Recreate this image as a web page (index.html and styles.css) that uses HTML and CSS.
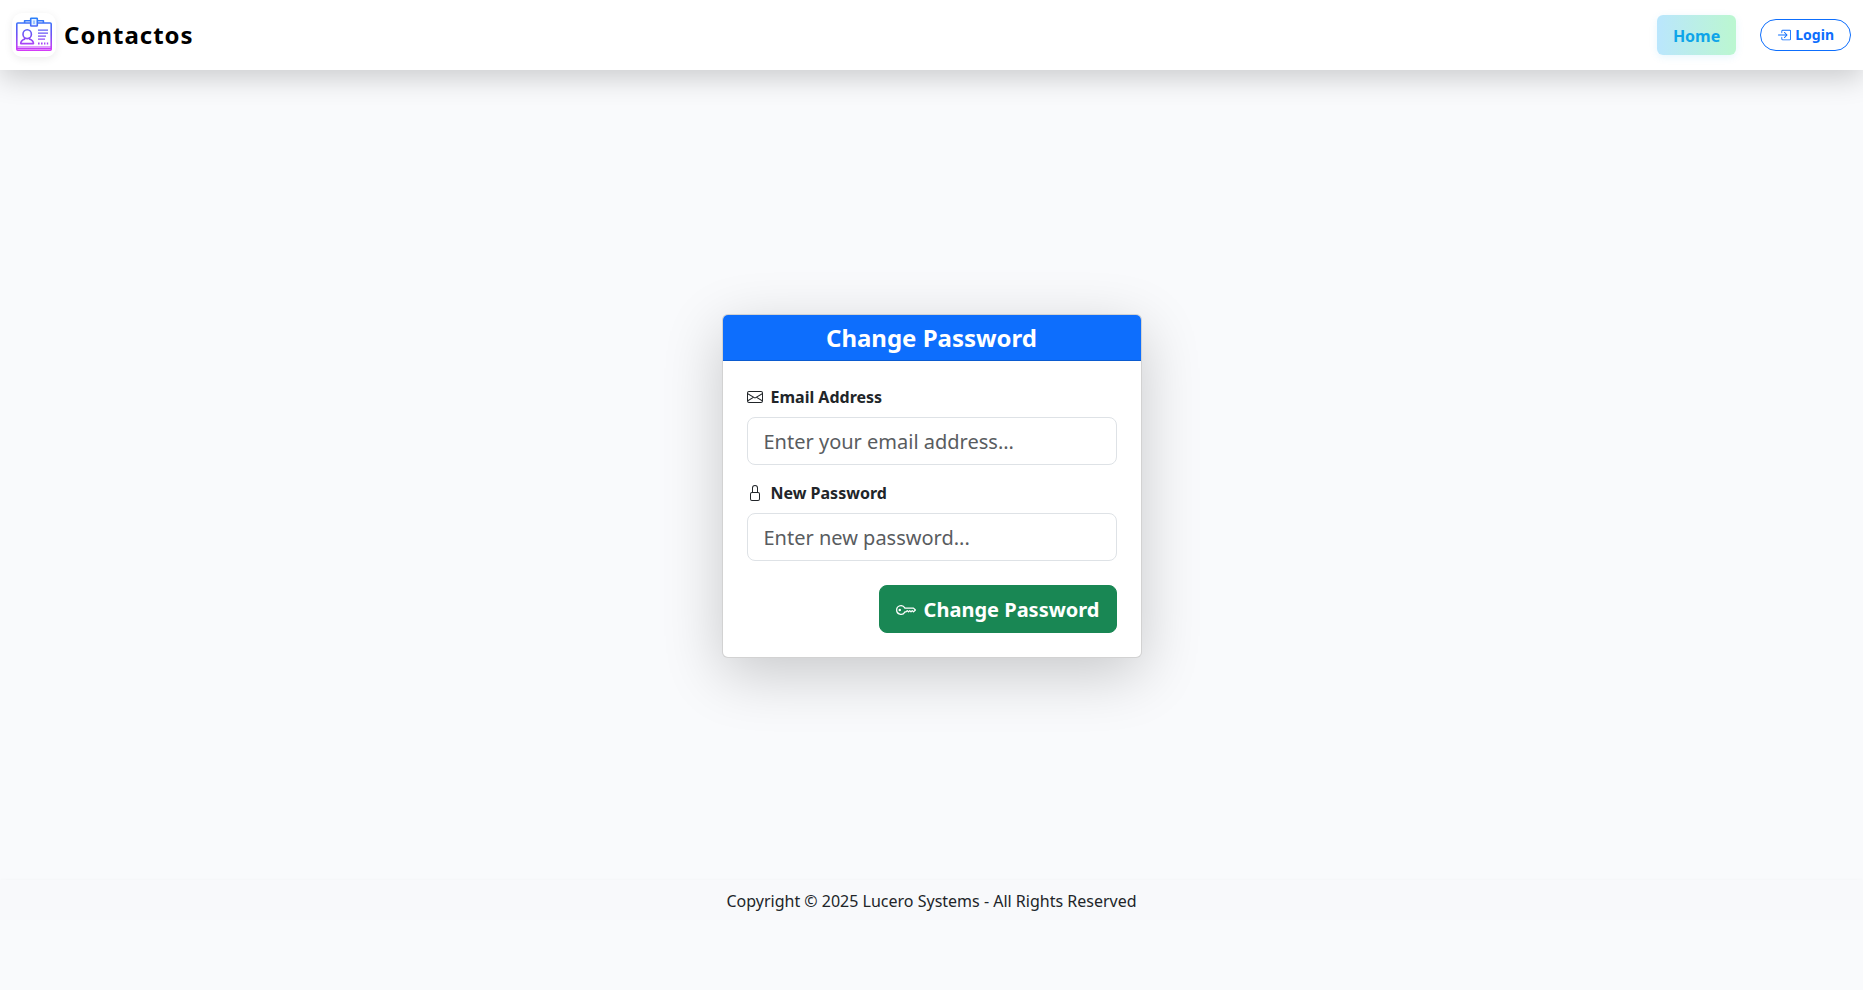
FILE: index.html
```html
<!DOCTYPE html>
<html lang="en">
<head>
  <meta charset="utf-8">
  <meta name="viewport" content="width=device-width, initial-scale=1">
  <title>Contactos - Change Password</title>
  <link rel="stylesheet" href="styles.css">
</head>
<body>
  <nav class="navbar">
    <a class="brand" href="#">
      <span class="brand-logo">
        <svg viewBox="0 0 36 36" fill="none" stroke="url(#logo-gradient)" stroke-width="1.6" stroke-linejoin="round" aria-hidden="true">
          <defs>
            <linearGradient id="logo-gradient" gradientUnits="userSpaceOnUse" x1="0" y1="0" x2="0" y2="35">
              <stop offset="0" stop-color="#2583fb"/>
              <stop offset="0.5" stop-color="#7052f5"/>
              <stop offset="1" stop-color="#dd38f8"/>
            </linearGradient>
          </defs>
          <rect x="0.8" y="6" width="34.4" height="27.3" rx="1"/>
          <path d="M1 30h34M1 31.7h34" stroke-width="1.2"/>
          <path d="M8.6 6V3.7h6M21.4 3.7h6V6"/>
          <rect x="14.7" y="1.2" width="6.6" height="7.8" rx="0.6" fill="#e6f1ff"/>
          <path d="M18 3.4v3.6" stroke="#8dbcff"/>
          <path d="M8.6 20.6v1.6C5.8 23 4.7 24.6 4.7 26.6h12.8c0-2-1.1-3.6-3.9-4.4v-1.6"/>
          <ellipse cx="11.2" cy="17.2" rx="4.2" ry="4.4"/>
          <path d="M22 13.2h10M22 16.2h10M22 19.2h8M22 22.2h7" stroke-width="1.3"/>
          <path d="M22 26.5h1.6M25 26.5h1.6M28 26.5h1.4M30.8 26.5h1.4" stroke-width="2"/>
        </svg>
      </span>
      <span class="brand-name">Contactos</span>
    </a>
    <div class="nav-actions">
      <a class="nav-link" href="#" aria-current="page">Home</a>
      <a class="login-link" href="#">
        <svg class="icon" viewBox="0 0 16 16" fill="currentColor" aria-hidden="true"><path fill-rule="evenodd" d="M6 3.5a.5.5 0 0 1 .5-.5h8a.5.5 0 0 1 .5.5v9a.5.5 0 0 1-.5.5h-8a.5.5 0 0 1-.5-.5v-2a.5.5 0 0 0-1 0v2A1.5 1.5 0 0 0 6.5 14h8a1.5 1.5 0 0 0 1.5-1.5v-9A1.5 1.5 0 0 0 14.5 2h-8A1.5 1.5 0 0 0 5 3.5v2a.5.5 0 0 0 1 0z"/><path fill-rule="evenodd" d="M11.854 8.354a.5.5 0 0 0 0-.708l-3-3a.5.5 0 1 0-.708.708L10.293 7.5H1.5a.5.5 0 0 0 0 1h8.793l-2.147 2.146a.5.5 0 0 0 .708.708z"/></svg>
        Login
      </a>
    </div>
  </nav>

  <main class="page">
    <section class="card">
      <h1 class="card-title">Change Password</h1>
      <form class="card-body">
        <div class="field">
          <label class="field-label" for="email">
            <svg class="icon" viewBox="0 0 16 16" fill="currentColor" aria-hidden="true"><path d="M0 4a2 2 0 0 1 2-2h12a2 2 0 0 1 2 2v8a2 2 0 0 1-2 2H2a2 2 0 0 1-2-2zm2-1a1 1 0 0 0-1 1v.217l7 4.2 7-4.2V4a1 1 0 0 0-1-1zm13 2.383-4.708 2.825L15 11.105zm-.034 6.876-5.64-3.471L8 9.583l-1.326-.795-5.64 3.47A1 1 0 0 0 2 13h12a1 1 0 0 0 .966-.741M1 11.105l4.708-2.897L1 5.383z"/></svg>
            Email Address
          </label>
          <input class="field-input" id="email" type="email" placeholder="Enter your email address...">
        </div>
        <div class="field">
          <label class="field-label" for="password">
            <svg class="icon" viewBox="0 0 16 16" fill="currentColor" aria-hidden="true"><path d="M8 1a2 2 0 0 1 2 2v4H6V3a2 2 0 0 1 2-2m3 6V3a3 3 0 0 0-6 0v4a2 2 0 0 0-2 2v5a2 2 0 0 0 2 2h6a2 2 0 0 0 2-2V9a2 2 0 0 0-2-2M5 8h6a1 1 0 0 1 1 1v5a1 1 0 0 1-1 1H5a1 1 0 0 1-1-1V9a1 1 0 0 1 1-1"/></svg>
            New Password
          </label>
          <input class="field-input" id="password" type="password" placeholder="Enter new password...">
        </div>
        <button class="submit" type="submit">
          <svg class="icon" viewBox="0 0 16 16" fill="currentColor" aria-hidden="true"><path d="M0 8a4 4 0 0 1 7.465-2H14a.5.5 0 0 1 .354.146l1.5 1.5a.5.5 0 0 1 0 .708l-1.5 1.5a.5.5 0 0 1-.708 0L13 9.207l-.646.647a.5.5 0 0 1-.708 0L11 9.207l-.646.647a.5.5 0 0 1-.708 0L9 9.207l-.646.647A.5.5 0 0 1 8 10h-.535A4 4 0 0 1 0 8m4-3a3 3 0 1 0 2.712 4.285A.5.5 0 0 1 7.163 9h.63l.853-.854a.5.5 0 0 1 .708 0l.646.647.646-.647a.5.5 0 0 1 .708 0l.646.647.646-.647a.5.5 0 0 1 .708 0l.646.647.793-.793-1-1h-6.63a.5.5 0 0 1-.451-.285A3 3 0 0 0 4 5"/><path d="M4 8a1 1 0 1 1-2 0 1 1 0 0 1 2 0"/></svg>
          Change Password
        </button>
      </form>
    </section>
  </main>

  <footer class="footer">Copyright © 2025 Lucero Systems - All Rights Reserved</footer>
</body>
</html>
```
FILE: styles.css
```css
*,
*::before,
*::after {
  box-sizing: border-box;
}

body {
  margin: 0;
  background: #f9fafc;
  color: #212529;
  font-family: "Noto Sans", "Liberation Sans", sans-serif;
  font-size: 16px;
  line-height: 24px;
}

a {
  text-decoration: none;
}

.icon {
  width: 1em;
  height: 1em;
  flex: none;
}

.navbar {
  position: relative;
  display: flex;
  align-items: center;
  justify-content: space-between;
  height: 70px;
  padding: 0 12px;
  background: #fff;
  box-shadow: 0 8px 28px rgba(0, 0, 0, 0.19);
}

.brand {
  display: flex;
  align-items: center;
  gap: 8px;
  color: #000;
}

.brand-logo {
  display: grid;
  padding: 4px;
  border-radius: 10px;
  background: #fff;
  box-shadow: 0 2px 8px rgba(0, 0, 0, 0.08);
}

.brand-logo svg {
  width: 36px;
  height: 36px;
}

.brand-name {
  font-size: 24px;
  font-weight: 700;
  line-height: 36px;
  letter-spacing: 1px;
}

.nav-actions {
  display: flex;
  align-items: center;
  gap: 24px;
}

.nav-link {
  padding: 9px 16px 7px;
  border-radius: 6px;
  background: linear-gradient(90deg, #bae6fd, #bbf7d0);
  box-shadow: 0 2px 8px rgba(14, 165, 233, 0.1);
  color: #0ea5e9;
  font-weight: 700;
}

.login-link {
  display: flex;
  align-items: center;
  gap: 4px;
  padding: 4px 16px;
  border: 1px solid #0d6efd;
  border-radius: 16px;
  color: #0d6efd;
  font-size: 14px;
  font-weight: 700;
  line-height: 22px;
}

.page {
  display: flex;
  align-items: center;
  justify-content: center;
  min-height: calc(100vh - 180px);
  padding: 22px 12px 0;
}

.card {
  width: 100%;
  max-width: 420px;
  border: 1px solid rgba(0, 0, 0, 0.175);
  border-radius: 6px;
  background: #fff;
  box-shadow: 0 16px 60px rgba(0, 0, 0, 0.2);
}

.card-title {
  margin: 0;
  padding: 8px 16px;
  border-bottom: 1px solid #0b5bd0;
  border-radius: 5px 5px 0 0;
  background: #0d6efd;
  color: #fff;
  font-size: 24px;
  font-weight: 700;
  line-height: 29px;
  text-align: center;
}

.card-body {
  display: flex;
  flex-direction: column;
  gap: 16px;
  padding: 24px;
}

.field {
  display: flex;
  flex-direction: column;
  gap: 8px;
}

.field-label {
  display: flex;
  align-items: center;
  gap: 8px;
  font-weight: 700;
}

.field-input {
  width: 100%;
  padding: 9px 16px 7px;
  border: 1px solid #dee2e6;
  border-radius: 8px;
  background: #fff;
  color: #212529;
  font: inherit;
  font-size: 20px;
  line-height: 30px;
}

.field-input::placeholder {
  color: #595c5f;
  opacity: 1;
}

.submit {
  display: flex;
  align-items: center;
  align-self: flex-end;
  gap: 8px;
  margin-top: 8px;
  padding: 9px 16px 7px;
  border: 1px solid #198754;
  border-radius: 8px;
  background: #198754;
  color: #fff;
  font: inherit;
  font-size: 20px;
  font-weight: 700;
  line-height: 30px;
}

.footer {
  padding: 9px 12px 7px;
  background: #f8f9fb;
  box-shadow: 0 3px 6px rgba(0, 0, 0, 0.09);
  text-align: center;
}
```
